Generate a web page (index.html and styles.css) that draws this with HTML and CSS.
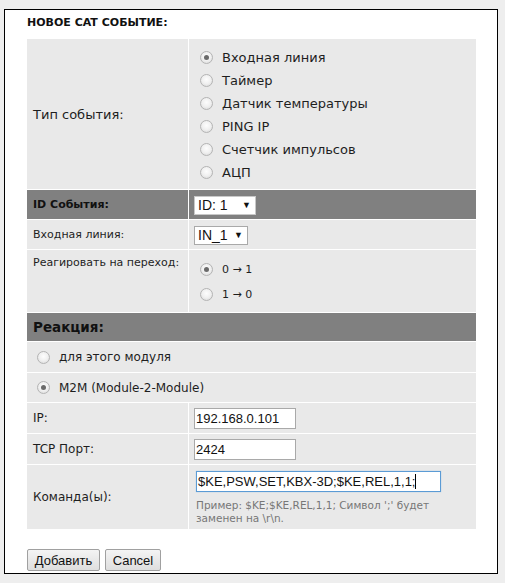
FILE: index.html
```html
<!DOCTYPE html>
<html lang="ru">
<head>
<meta charset="utf-8">
<title>Новое CAT событие</title>
<link rel="stylesheet" href="styles.css">
</head>
<body>
<div class="panel">
  <h3 class="title">НОВОЕ CAT СОБЫТИЕ:</h3>
  <form class="form">
    <table class="grid">
      <tr class="row-type">
        <td class="label lg">Тип события:</td>
        <td class="value">
          <div class="opt big"><span class="radio on"></span>Входная линия</div>
          <div class="opt big"><span class="radio"></span>Таймер</div>
          <div class="opt big"><span class="radio"></span>Датчик температуры</div>
          <div class="opt big"><span class="radio"></span>PING IP</div>
          <div class="opt big"><span class="radio"></span>Счетчик импульсов</div>
          <div class="opt big"><span class="radio"></span>АЦП</div>
        </td>
      </tr>
      <tr class="row-id dark">
        <td class="label bold">ID События:</td>
        <td class="value"><span class="select sel-id">ID: 1<span class="arrow">▼</span></span></td>
      </tr>
      <tr class="row-line">
        <td class="label">Входная линия:</td>
        <td class="value"><span class="select sel-in">IN_1<span class="arrow">▼</span></span></td>
      </tr>
      <tr class="row-edge">
        <td class="label top">Реагировать на переход:</td>
        <td class="value edge">
          <div class="opt small"><span class="radio on"></span>0 → 1</div>
          <div class="opt small"><span class="radio"></span>1 → 0</div>
        </td>
      </tr>
      <tr class="row-head dark">
        <td class="label head" colspan="2">Реакция:</td>
      </tr>
      <tr class="row-full">
        <td class="full" colspan="2"><div class="opt mid"><span class="radio"></span>для этого модуля</div></td>
      </tr>
      <tr class="row-full2">
        <td class="full" colspan="2"><div class="opt mid"><span class="radio on"></span>M2M (Module-2-Module)</div></td>
      </tr>
      <tr class="row-ip">
        <td class="label md">IP:</td>
        <td class="value"><input class="text short" type="text" value="192.168.0.101"></td>
      </tr>
      <tr class="row-port">
        <td class="label md">TCP Порт:</td>
        <td class="value"><input class="text short" type="text" value="2424"></td>
      </tr>
      <tr class="row-cmd">
        <td class="label md">Команда(ы):</td>
        <td class="value cmd">
          <div class="text long focus">$KE,PSW,SET,KBX-3D;$KE,REL,1,1;<span class="caret"></span></div>
          <div class="hint">Пример: $KE;$KE,REL,1,1; Символ ';' будет<br>заменен на \r\n.</div>
        </td>
      </tr>
    </table>
    <div class="actions">
      <button type="button" class="btn btn-add">Добавить</button>
      <button type="button" class="btn btn-cancel">Cancel</button>
    </div>
  </form>
</div>
</body>
</html>
```
FILE: styles.css
```css
html, body {
  margin: 0;
  padding: 0;
}
body {
  background: #eeeeee;
  padding: 9px 0 0 4px;
  font-family: "DejaVu Sans", Verdana, sans-serif;
  color: #1e1e1e;
}
.panel {
  box-sizing: border-box;
  width: 494px;
  height: 565px;
  border: 1px solid #000;
  background: #fff;
  padding: 0 0 0 22px;
}
.title {
  margin: 0;
  padding: 6px 0 0 0;
  height: 22px;
  font-size: 11px;
  line-height: 14px;
  font-weight: bold;
  color: #111;
}
.form {
  margin: 0;
}
.grid {
  border-collapse: separate;
  border-spacing: 1px;
  width: 451px;
  margin: 0 0 0 -1px;
  background: #fff;
}
.grid td {
  background: #e9e9e9;
  padding: 0;
  box-sizing: border-box;
}
.grid tr.dark td {
  background: #808080;
}
.label {
  width: 161px;
  padding-left: 6px !important;
  font-size: 11px;
  vertical-align: middle;
  white-space: nowrap;
}
.label.md {
  font-size: 12px;
}
.label.lg {
  font-size: 13px;
}
.label.top {
  vertical-align: top;
  padding-top: 6px !important;
}
.label.bold {
  font-weight: bold;
  font-size: 11px;
  color: #111;
}
.label.head {
  font-weight: bold;
  font-size: 13.5px;
  color: #111;
}
.value {
  padding-left: 5px !important;
  vertical-align: middle;
}
.row-type td { height: 150px; }
.row-type .value { padding-top: 1px !important; }
.row-id td { height: 29px; }
.row-line td { height: 29px; }
.row-edge td { height: 62px; }
.row-head td { height: 28px; }
.row-full td { height: 30px; }
.row-full2 td { height: 29px; }
.row-ip td { height: 30px; }
.row-port td { height: 30px; }
.row-cmd td { height: 64px; }

.opt {
  display: flex;
  align-items: center;
  color: #1e1e1e;
}
.opt.big {
  height: 23px;
  font-size: 13px;
  padding-left: 6px;
}
.opt.small {
  height: 25px;
  font-size: 11px;
  padding-left: 6px;
}
.value.edge { padding-top: 2px !important; }
.opt.mid {
  font-size: 12px;
  padding-left: 10px;
  height: 28px;
}
.full {
  vertical-align: middle;
}
.radio {
  display: inline-block;
  width: 11px;
  height: 11px;
  border: 1px solid #b4b4b4;
  border-radius: 50%;
  background: radial-gradient(circle at 50% 40%, #fdfdfd 0%, #f0f0f0 50%, #d6d6d6 100%);
  margin-right: 9px;
  position: relative;
  flex: none;
}
.radio.on::after {
  content: "";
  position: absolute;
  left: 3px;
  top: 3px;
  width: 5px;
  height: 5px;
  border-radius: 50%;
  background: #6a6a6a;
}
.select {
  display: inline-flex;
  align-items: center;
  justify-content: space-between;
  box-sizing: border-box;
  background: #fff;
  border: 1px solid #a9a9a9;
  font-family: "Liberation Sans", Arial, sans-serif;
  font-size: 14px;
  color: #111;
  padding: 0 4px 0 3px;
  vertical-align: middle;
}
.sel-id {
  width: 62px;
  height: 19px;
  border-color: #c8c8c8;
}
.sel-in {
  width: 54px;
  height: 19px;
}
.arrow {
  font-size: 9px;
  color: #111;
}
.text {
  box-sizing: border-box;
  font-family: "Liberation Sans", Arial, sans-serif;
  font-size: 13px;
  color: #111;
  border: 1px solid #a9a9a9;
  background: #fff;
  margin: 0;
  padding: 0 1px;
  outline: none;
  display: block;
}
.text.short {
  width: 102px;
  height: 21px;
}
.text.long {
  width: 245px;
  height: 21px;
  line-height: 19px;
  margin-left: 2px;
  border-color: #5b9bd5;
  box-shadow: 0 0 1px #9cc3e8;
  white-space: nowrap;
}
.caret {
  display: inline-block;
  width: 1px;
  height: 15px;
  background: #000;
  vertical-align: -3px;
}
.value.cmd {
  padding-top: 2px !important;
}
.hint {
  margin: 7px 0 0 2px;
  font-size: 10.5px;
  line-height: 13px;
  color: #777;
}
.actions {
  display: flex;
  gap: 5px;
  margin-top: 19px;
}
.btn {
  font-family: "Liberation Sans", Arial, sans-serif;
  font-size: 13px;
  color: #111;
  height: 22px;
  padding: 0 5px;
  border: 1px solid #a0a0a0;
  border-radius: 2px;
  background: linear-gradient(#f4f4f4, #dedede);
  margin: 0;
}
.btn-add { width: 73px; }
.btn-cancel { width: 56px; }
```
